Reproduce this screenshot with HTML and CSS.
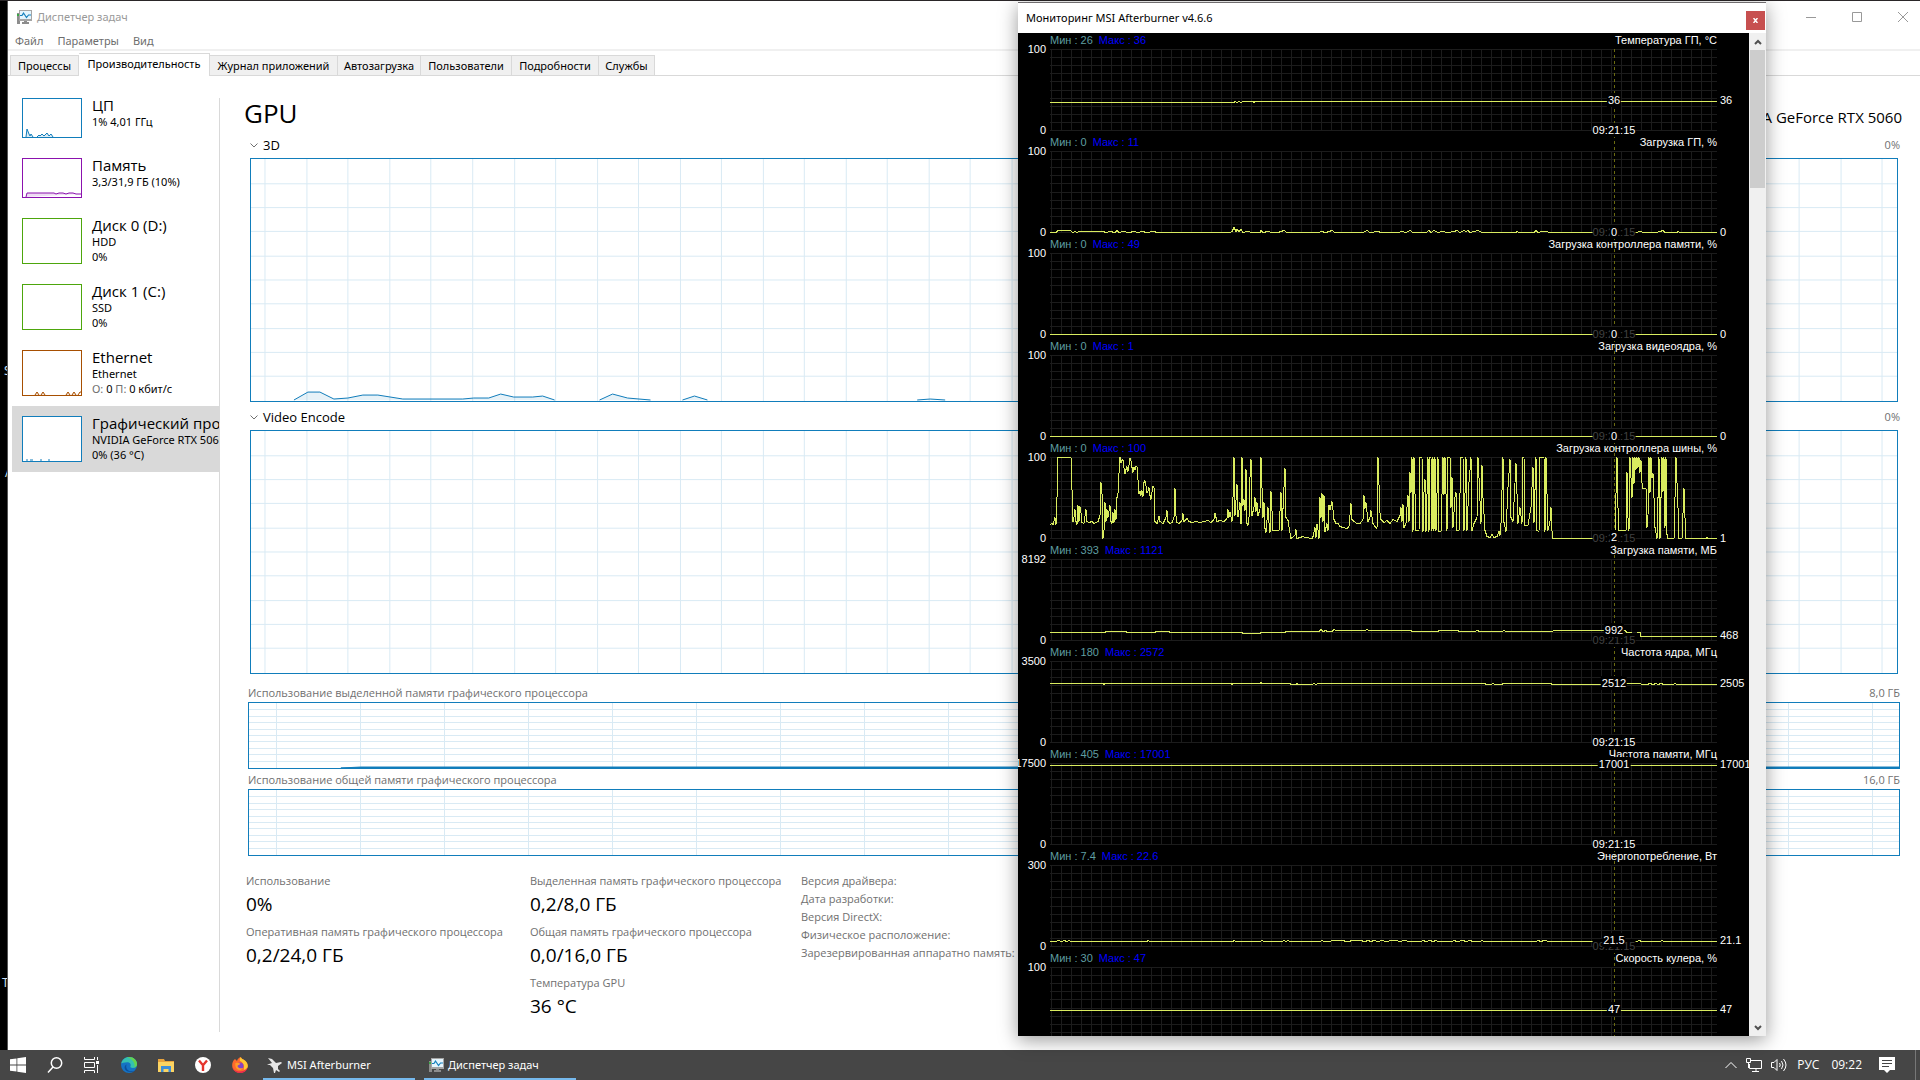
FILE: index.html
```html
<!DOCTYPE html>
<html lang="ru">
<head>
<meta charset="utf-8">
<title>Диспетчер задач</title>
<link rel="stylesheet" href="styles.css">
</head>
<body>
<svg class="defs" aria-hidden="true">
  <symbol id="grid-engine" viewBox="0 0 1648 244" preserveAspectRatio="none">
    <path class="grid-line" d="M14 0V244M56 0V244M97 0V244M139 0V244M180 0V244M222 0V244M264 0V244M305 0V244M347 0V244M388 0V244M430 0V244M471 0V244M513 0V244M554 0V244M596 0V244M637 0V244M679 0V244M720 0V244M762 0V244M803 0V244M845 0V244M886 0V244M928 0V244M969 0V244M1011 0V244M1052 0V244M1094 0V244M1135 0V244M1177 0V244M1218 0V244M1260 0V244M1301 0V244M1343 0V244M1384 0V244M1426 0V244M1467 0V244M1509 0V244M1550 0V244M1592 0V244M1633 0V244M0 25H1648M0 49H1648M0 73H1648M0 98H1648M0 122H1648M0 146H1648M0 171H1648M0 195H1648M0 219H1648"/>
  </symbol>
  <symbol id="grid-memory" viewBox="0 0 1652 67" preserveAspectRatio="none">
    <path class="grid-line" d="M28 0V67M112 0V67M196 0V67M280 0V67M364 0V67M448 0V67M532 0V67M616 0V67M700 0V67M785 0V67M869 0V67M953 0V67M1037 0V67M1121 0V67M1205 0V67M1289 0V67M1373 0V67M1457 0V67M1541 0V67M1625 0V67M0 7H1652M0 14H1652M0 20H1652M0 27H1652M0 33H1652M0 40H1652M0 47H1652M0 53H1652M0 60H1652"/>
  </symbol>
  <symbol id="icon-taskmgr" viewBox="0 0 16 16">
    <path fill="#8d8d8d" d="M1 4h3v11H1z"/><path fill="#39a845" d="M1 5h2v2H1z"/>
    <path fill="#a5a5a5" d="M3 1h13v11H3z"/><path fill="#e5f5fd" d="M4 2h11v8H4z"/>
    <path fill="none" stroke="#1680bd" stroke-width="1.2" d="M4 6.500h2L7.500 4l3 4.500L12.500 6H15"/>
    <path fill="#8d8d8d" d="M8 12h3v1h2v2H6v-2h2z"/>
  </symbol>
</svg>

<div class="desktop">
  <div class="workspace">
    <span class="shortcut shortcut-s">S</span>
    <span class="shortcut shortcut-a">A</span>
    <span class="shortcut shortcut-t">T</span>

    <main class="taskmgr">
      <header class="titlebar">
        <svg class="app-icon" aria-hidden="true"><use href="#icon-taskmgr"/></svg>
        <span class="title">Диспетчер задач</span>
        <div class="controls">
          <button aria-label="Свернуть"><svg viewBox="0 0 10 10"><path d="M0 5.500h10"/></svg></button>
          <button aria-label="Развернуть"><svg viewBox="0 0 10 10"><path d="M.5.5h9v9h-9z"/></svg></button>
          <button aria-label="Закрыть"><svg viewBox="0 0 10 10"><path d="M0 0l10 10M10 0L0 10"/></svg></button>
        </div>
      </header>
      <nav class="menu"><button>Файл</button><button>Параметры</button><button>Вид</button></nav>
      <nav class="tabs">
        <button>Процессы</button><button class="active">Производительность</button><button>Журнал приложений</button><button>Автозагрузка</button><button>Пользователи</button><button>Подробности</button><button>Службы</button>
      </nav>
      <div class="content">
        <aside class="sidebar">
          <button class="item">
            <svg class="thumb short cpu" viewBox="0 0 58 38"><path d="M3 38l1-8 2 5 1 2 1-2 2 3M14 38l2-2 1 1 2-2 2 2 3-3 2 3 2-2 2 3"/></svg>
            <span class="text"><span class="name">ЦП</span><span>1% 4,01 ГГц</span></span>
          </button>
          <button class="item">
            <svg class="thumb short mem" viewBox="0 0 58 38"><path d="M3 38l1-4h27l2 1 3-1h4l3 1 3-1h4l3 1h6"/></svg>
            <span class="text"><span class="name">Память</span><span>3,3/31,9 ГБ (10%)</span></span>
          </button>
          <button class="item">
            <svg class="thumb disk" viewBox="0 0 58 44"></svg>
            <span class="text"><span class="name">Диск 0 (D:)</span><span>HDD</span><span>0%</span></span>
          </button>
          <button class="item">
            <svg class="thumb disk" viewBox="0 0 58 44"></svg>
            <span class="text"><span class="name">Диск 1 (C:)</span><span>SSD</span><span>0%</span></span>
          </button>
          <button class="item">
            <svg class="thumb net" viewBox="0 0 58 44"><path d="M12 44l2-3 2 3M18 44l2-3 2 3M43 44l2-3 2 3M49 44l2-3 2 3M55 44l2-3 1 0"/></svg>
            <span class="text"><span class="name">Ethernet</span><span>Ethernet</span><span><i>О:</i> 0 <i>П:</i> 0 кбит/с</span></span>
          </button>
          <button class="item selected">
            <svg class="thumb cpu" viewBox="0 0 58 44"><path d="M3 43h2M7 43h3M17 43h2M25 43h2"/></svg>
            <span class="text"><span class="name">Графический процессор</span><span>NVIDIA GeForce RTX 5060</span><span>0% (36 °C)</span></span>
          </button>
        </aside>

        <section class="gpu">
          <div class="gpu-head"><h1>GPU</h1><span>NVIDIA GeForce RTX 5060</span></div>

          <div class="engine">
            <div class="chart-head">
              <svg class="chevron" viewBox="0 0 8 5"><path d="M.5.5L4 4 7.500.5"/></svg><h2>3D</h2><span>0%</span>
            </div>
            <svg class="chart" viewBox="0 0 1648 244" preserveAspectRatio="none">
              <use href="#grid-engine"/>
              <path class="usage" d="M43 243L57 235H69L83 242 97 241 112 238H127L152 242H212L223 241H238L250 237 263 240H282L292 239 304 243M349 243L362 237 377 241 400 243M432 243L444 239 457 243M667 243L680 242 695 243"/>
            </svg>
          </div>

          <div class="engine">
            <div class="chart-head">
              <svg class="chevron" viewBox="0 0 8 5"><path d="M.5.5L4 4 7.500.5"/></svg><h2>Video Encode</h2><span>0%</span>
            </div>
            <svg class="chart" viewBox="0 0 1648 244" preserveAspectRatio="none"><use href="#grid-engine"/></svg>
          </div>

          <div class="memory">
            <div class="memory-head"><span>Использование выделенной памяти графического процессора</span><span>8,0 ГБ</span></div>
            <svg class="memory-chart" viewBox="0 0 1652 67" preserveAspectRatio="none">
              <use href="#grid-memory"/>
              <path class="usage solid" d="M92 67L112 66H1652V67z"/>
            </svg>
            <div class="memory-head second"><span>Использование общей памяти графического процессора</span><span>16,0 ГБ</span></div>
            <svg class="memory-chart" viewBox="0 0 1652 67" preserveAspectRatio="none"><use href="#grid-memory"/></svg>
          </div>

          <div class="stats">
            <dl>
              <dt>Использование</dt><dd>0%</dd>
              <dt>Оперативная память графического процессора</dt><dd>0,2/24,0 ГБ</dd>
            </dl>
            <dl>
              <dt>Выделенная память графического процессора</dt><dd>0,2/8,0 ГБ</dd>
              <dt>Общая память графического процессора</dt><dd>0,0/16,0 ГБ</dd>
              <dt>Температура GPU</dt><dd>36 °C</dd>
            </dl>
            <ul>
              <li>Версия драйвера:</li><li>Дата разработки:</li><li>Версия DirectX:</li><li>Физическое расположение:</li><li>Зарезервированная аппаратно память:</li>
            </ul>
          </div>
        </section>
      </div>
    </main>

    <section class="monitor">
      <header class="monitor-title"><span>Мониторинг MSI Afterburner v4.6.6</span><button aria-label="Закрыть"><svg viewBox="0 0 5 5"><path d="M.5 0l4 5M4.500 0l-4 5"/></svg></button></header>
      <div class="monitor-body">
        <div class="graphs">

          <article class="graph">
            <header><span class="min">Мин : 26</span><span class="max">Макс : 36</span><h3>Температура ГП, °C</h3></header>
            <div class="scale"><span>100</span><span>0</span></div>
            <div class="plot">
              <svg viewBox="0 0 667 82"><path d="M0 53H184L185 52 187 53 189 52 191 53 193 52H203L204 53 205 52H667"/></svg>
              <span class="time">09:21:15</span><span class="value" style="top:51px">36</span>
              <span class="now" style="top:51px">36</span>
            </div>
          </article>

          <article class="graph">
            <header><span class="min">Мин : 0</span><span class="max">Макс : 11</span><h3>Загрузка ГП, %</h3></header>
            <div class="scale"><span>100</span><span>0</span></div>
            <div class="plot">
              <svg viewBox="0 0 667 82"><path d="M0 81H6L8 79H20L23 81 25 80 27 81 29 80H51L53 80 56 81 60 80 65 81 67 79 69 81 73 80 79 81 84 80 88 81 92 80 97 81 104 80 107 81H180L182 80 184 76 186 80 187 78 189 80 191 78 193 81 197 80 203 81 210 81 211 79 213 81 218 80 222 81 228 81 234 79 237 81H269L271 80 276 81 282 79 285 81H313L317 79 320 81 328 80 331 81H348L352 80 356 81 360 79 363 81H376L379 79 381 81 384 79 388 81 392 80 398 81 404 80 407 79 410 81 414 79 416 80 418 79 420 81 424 80 428 79 432 81H452L466 81 467 80 469 81H484L486 79 488 81 492 80 496 80 500 81H586L590 80 594 81 602 81 606 81 610 80 613 79 615 81H627L628 80 630 81H667"/></svg>
              <span class="time dim">09:21:15</span><span class="value" style="top:81px">0</span>
              <span class="now" style="top:81px">0</span>
            </div>
          </article>

          <article class="graph">
            <header><span class="min">Мин : 0</span><span class="max">Макс : 49</span><h3>Загрузка контроллера памяти, %</h3></header>
            <div class="scale"><span>100</span><span>0</span></div>
            <div class="plot">
              <svg viewBox="0 0 667 82"><path d="M0 81H667"/></svg>
              <span class="time dim">09:21:15</span><span class="value" style="top:81px">0</span>
              <span class="now" style="top:81px">0</span>
            </div>
          </article>

          <article class="graph">
            <header><span class="min">Мин : 0</span><span class="max">Макс : 1</span><h3>Загрузка видеоядра, %</h3></header>
            <div class="scale"><span>100</span><span>0</span></div>
            <div class="plot">
              <svg viewBox="0 0 667 82"><path d="M0 81H667"/></svg>
              <span class="time dim">09:21:15</span><span class="value" style="top:81px">0</span>
              <span class="now" style="top:81px">0</span>
            </div>
          </article>

          <article class="graph">
            <header><span class="min">Мин : 0</span><span class="max">Макс : 100</span><h3>Загрузка контроллера шины, %</h3></header>
            <div class="scale"><span>100</span><span>0</span></div>
            <div class="plot">
              <svg viewBox="0 0 667 82"><path d="M0 67L2 66 3 67 5 60 6 67 7 40 8 0H21L22 32 23 64 24 60 25 52 26 64 27 67 28 48 29 64 30 49 31 55 32 65 34 66 36 52 37 64 39 65 42 64 44 66 46 65 48 64 50 58 51 25 52 36 53 81 54 73 55 45 56 64 57 52 58 60 60 48 61 64 62 66 63 55 64 65 65 52 66 62 67 40 68 36 69 16 70 0 71 5 72 3 73 2 74 10 75 16 76 12 77 9 78 14 79 8 80 1 81 3 82 10 83 15 84 10 85 12 86 9 87 9 88 22 89 36 90 34 91 38 92 33 93 39 94 25 95 23 96 28 97 35 98 34 99 30 100 38 101 42 102 35 103 29 104 30 105 64 107 66 109 59 110 64 113 66 116 60 117 53 118 64 120 66 122 65 124 60 125 31 126 58 127 65 129 66 132 63 133 56 134 64 137 61 139 64 142 65 146 64 150 65 154 64 158 63 161 65 164 62 165 56 167 64 170 63 174 64 177 61 178 52 179 60 180 55 182 64 183 40 184 0 185 58 187 27 188 60 190 45 191 66 191 0 192 0 193 48 194 42 195 53 196 12 197 66 198 68 199 60 200 20 201 2 202 58 204 50 205 40 206 54 207 45 208 58 210 52 211 0 212 30 213 60 214 45 215 71 216 75 218 50 219 65 220 75 221 34 223 73 229 73 231 35 232 73 234 30 235 11 236 60 238 63 240 75 241 81 245 78 246 72 247 81 253 79 255 80 262 81 263 79 265 70 266 80 267 67 268 72 269 81 270 40 271 60 272 36 273 64 274 38 275 74 277 66 278 73 279 48 280 52 282 44 283 52 284 62 286 66 288 66 290 69 293 70 297 71 299 69 301 46 302 62 304 64 307 66 310 66 313 62 314 38 315 51 316 45 318 64 320 60 321 53 323 66 325 69 327 71 328 0 330 55 331 62 334 65 337 63 340 66 343 62 347 64 350 58 351 50 352 64 353 47 354 70 356 66 357 50 358 38 359 64 360 15 361 35 362 0 363 74 364 0 366 73 369 73 370 0 372 0 373 74 374 35 375 22 376 74 378 0 379 74 380 0 381 0 382 73 383 0 384 73 385 0 386 73 388 0 389 74 391 74 393 0 394 37 395 0 397 73 398 0 400 0 401 50 402 20 403 70 405 40 406 35 407 73 409 73 411 0 413 0 414 73 416 0 417 73 419 25 421 0 422 73 424 66 427 60 428 0 429 20 431 66 432 8 433 40 435 73 437 79 440 80 442 77 444 80 447 79 449 74 450 78 451 66 453 0 454 65 456 74 458 30 460 2 461 60 463 64 466 6 468 66 470 50 472 66 473 0 474 0 475 68 478 68 481 50 483 10 484 65 486 0 487 73 489 74 490 0 494 0 495 74 496 0 498 73 500 64 501 50 502 73 503 81 564 81 565 73 567 0 568 50 569 73 576 73 577 15 578 60 579 73 580 0 582 40 583 0 584 26 585 0 586 12 587 0 588 10 589 0 590 15 591 3 592 25 593 31 596 31 597 70 598 58 599 0 600 35 601 0 602 20 603 16 604 40 605 70 607 81 609 0 610 81 612 0 613 34 614 0 615 70 616 0 617 77 618 81 624 81 625 40 626 0 628 50 629 81 632 81 634 31 635 60 636 81 656 81 657 80 658 81H667"/></svg>
              <span class="time dim">09:21:15</span><span class="value" style="top:80px">2</span>
              <span class="now" style="top:81px">1</span>
            </div>
          </article>

          <article class="graph">
            <header><span class="min">Мин : 393</span><span class="max">Макс : 1121</span><h3>Загрузка памяти, МБ</h3></header>
            <div class="scale"><span>8192</span><span>0</span></div>
            <div class="plot">
              <svg viewBox="0 0 667 82"><path d="M0 73H55V72H76V73H105V72H119V73H192V74H210V73H235V72H269L271 70 273 72 276 71 277 72H282L284 70 286 71H315L317 70 319 71H361V72H388V71H408V72H425L427 71 430 72H452L454 71 456 72H502L504 71H575L577 73H582M587 73H590V77H667"/></svg>
              <span class="time dim">09:21:15</span><span class="value" style="top:71px">992</span>
              <span class="now" style="top:76px">468</span>
            </div>
          </article>

          <article class="graph">
            <header><span class="min">Мин : 180</span><span class="max">Макс : 2572</span><h3>Частота ядра, МГц</h3></header>
            <div class="scale"><span>3500</span><span>0</span></div>
            <div class="plot">
              <svg viewBox="0 0 667 82"><path d="M0 22H53L54 23 55 22H181L182 23 183 22H210L211 21 212 22H240V23H246L247 22 248 23H262L264 22 266 23 268 22H435V23H441L443 22 445 23H452V22H501V23H560L577 22H590L592 23H597L600 22 603 23 606 22 608 23 611 22 614 23H623L625 22 627 23H667"/></svg>
              <span class="time">09:21:15</span><span class="value" style="top:22px">2512</span>
              <span class="now" style="top:22px">2505</span>
            </div>
          </article>

          <article class="graph">
            <header><span class="min">Мин : 405</span><span class="max">Макс : 17001</span><h3>Частота памяти, МГц</h3></header>
            <div class="scale"><span>17500</span><span>0</span></div>
            <div class="plot">
              <svg viewBox="0 0 667 82"><path d="M0 2H667"/></svg>
              <span class="time">09:21:15</span><span class="value" style="top:1px">17001</span>
              <span class="now" style="top:1px">17001</span>
            </div>
          </article>

          <article class="graph">
            <header><span class="min">Мин : 7.4</span><span class="max">Макс : 22.6</span><h3>Энергопотребление, Вт</h3></header>
            <div class="scale"><span>300</span><span>0</span></div>
            <div class="plot">
              <svg viewBox="0 0 667 82"><path d="M0 76H6L8 75 12 76 14 75 17 76 19 75 21 76H97L98 75 100 76H183L184 75 186 76H210L212 75 214 76H232L234 75 236 76 238 75 240 76H270L272 75 274 76H280L282 75H294V76H300V75H312V76H315L318 75 321 76 324 75 328 76 332 75 336 76H338L340 75H346L350 76 354 75 360 76H371L373 75 376 76 380 75 383 76 386 75 388 76H402L404 75 407 76 413 75 416 76 420 75 423 76H430L432 75 434 76H486L488 75 491 76 494 75 500 76H587L589 75 592 76H610L612 75 614 76H667"/></svg>
              <span class="time dim">09:21:15</span><span class="value" style="top:75px">21.5</span>
              <span class="now" style="top:75px">21.1</span>
            </div>
          </article>

          <article class="graph">
            <header><span class="min">Мин : 30</span><span class="max">Макс : 47</span><h3>Скорость кулера, %</h3></header>
            <div class="scale"><span>100</span><span>0</span></div>
            <div class="plot">
              <svg viewBox="0 0 667 82"><path d="M0 43H667"/></svg>
              <span class="time">09:21:15</span><span class="value" style="top:42px">47</span>
              <span class="now" style="top:42px">47</span>
            </div>
          </article>
        </div>
        <div class="scrollbar">
          <button aria-label="Вверх"><svg viewBox="0 0 8 6"><path d="M1 5l3-3 3 3"/></svg></button>
          <div class="thumb-bar"></div>
          <button aria-label="Вниз"><svg viewBox="0 0 8 6"><path d="M1 1l3 3 3-3"/></svg></button>
        </div>
      </div>
    </section>
  </div>

  <footer class="taskbar">
    <button class="pin" aria-label="Пуск"><svg viewBox="0 0 16 16" fill="#fff"><path d="M0 2.300l6.500-.9v6.200H0zM7.300 1.300L16 0v7.600H7.300zM0 8.400h6.500v6.200L0 13.700zM7.300 8.400H16V16l-8.700-1.300z"/></svg></button>
    <button class="pin" aria-label="Поиск"><svg viewBox="0 0 16 16" fill="none" stroke="#fff" stroke-width="1.500"><circle cx="9.500" cy="6" r="5.200"/><path d="M6 10l-5 5.500"/></svg></button>
    <button class="pin" aria-label="Представление задач"><svg viewBox="0 0 16 16" fill="none" stroke="#fff"><path d="M.5 0v2.500h10V0M.5 5.500h10v5H.5zM.5 16v-2.500h10V16M13.500 0v3M13.500 8v8"/><path fill="#fff" stroke="none" d="M12 4h3v3h-3z"/></svg></button>
    <button class="pin" aria-label="Edge"><svg viewBox="0 0 16 16"><circle cx="8" cy="8" r="8" fill="#1573c4"/><path fill="#35c1b0" d="M.3 6.500C1.200 2.500 4.300 0 8 0c4.800 0 8 3.400 8 7 0 2.600-2 4-4.200 4-1.700 0-2.800-.7-2.400-1.400C10.400 7.500 9 5.300 6.300 5.300 3 5.300.6 6.300.3 6.500z"/><path fill="#64d34f" d="M8 0c4.800 0 8 3.400 8 7 0 2-1.200 3.200-2.600 3.700C14.500 7 12 2 6.500.2 7 0 7.500 0 8 0z"/><path fill="#0c4f9c" d="M5.600 7.500c-1.500 3.500 1.400 7.300 5.400 6.800 1.400-.1 2.600-.7 3.600-1.400-3 3-8.700 3-10.600-.6C3 10.300 3.800 8.300 5.600 7.500z"/></svg></button>
    <button class="pin" aria-label="Проводник"><svg viewBox="0 0 16 16"><path fill="#e8a33d" d="M0 2h6l1 2h9v3H0z"/><path fill="#fcd462" d="M0 5h16v10H0z"/><path fill="#3f8fd8" d="M3 9h10v6h-2.500v-3h-5v3H3z"/></svg></button>
    <button class="pin" aria-label="Яндекс"><svg viewBox="0 0 16 16"><circle cx="8" cy="8" r="8" fill="#fff"/><path fill="none" stroke="#e5352d" stroke-width="2.400" d="M4 3.500l4 4.700 4-4.700M8 8v6"/></svg></button>
    <button class="pin" aria-label="Firefox"><svg viewBox="0 0 16 16"><path fill="#ff6a2b" d="M3 2l2 2c.5-2 2-3.500 4-4 0 2 3 2.500 4.500 4C15.500 6 16 8 15.700 10c-.8 3.700-4 6-7.700 6-4.200 0-7.500-3-7.800-7C0 6 1 3.500 3 2z"/><path fill="#ffc933" d="M9 0c0 2 3 2.500 4.500 4 2 2 2.500 4 2.200 6-.8 2-2.500 3-4 2.500C13 9 11 5 8 4c-.5-1.500 0-3 1-4z"/><circle cx="8" cy="9" r="3.500" fill="#8443c9"/><path fill="#ff9c2a" d="M3.500 6c2-.7 3.500 0 5 .8C7.500 8 6 8 5.500 9c.5 2.500 4 3 6 1.500-1 2.500-4.500 3.500-6.500 1.500-1.800-1.800-2-4-1.500-6z"/><path fill="#e8264f" d="M.2 9c.8 3 3 5.500 7.800 5.500 2.500 0 5.500-1 7.500-4C14.700 14 11.500 16 8 16 4.200 16 .5 13 .2 9z"/></svg></button>
    <button class="task"><svg viewBox="0 0 16 16" fill="#e8e8e8"><path d="M1 1l4 1 4 4 5-1 1 1-4 3 0 3 2 2-1 1-3-2-1 3-1 0-1-5-3-3-3 0L2 7l3-1z"/></svg>MSI Afterburner</button>
    <button class="task"><svg viewBox="0 0 16 16"><use href="#icon-taskmgr"/></svg>Диспетчер задач</button>
    <div class="tray">
      <button aria-label="Скрытые значки"><svg width="12" height="8" viewBox="0 0 12 8"><path d="M.5 7L6 1.500 11.500 7"/></svg></button>
      <svg width="16" height="14" viewBox="0 0 16 14"><path d="M5 2.500h10.500v8H3.500V6M10 10.500v3M6 13.500h7M.5.5h4v4h-4zM2.500 5v5"/></svg>
      <svg width="17" height="14" viewBox="0 0 17 14"><path d="M.5 4.500H3L6 1.500v11l-3-3H.5zM8.500 5q1.500 2 0 4M10.500 3q3 4 0 8M12.500 1q5 6 0 12"/></svg>
      <span class="lang">РУС</span>
      <span class="clock">09:22</span>
      <button aria-label="Уведомления"><svg width="16" height="16" viewBox="0 0 16 16"><path class="bubble" d="M0 0h16v13h-5l-3 3-3-3H0z"/><path class="lines" d="M3 3.500h10M3 6.500h10M3 9.500h7"/></svg></button>
    </div>
  </footer>
</div>
</body>
</html>
```
FILE: styles.css
```css
* { box-sizing: border-box; margin: 0; padding: 0; }

body {
  font: 11px/18px "Noto Sans", "Open Sans", sans-serif;
  color: #000;
  background: #000;
}

button { font: inherit; color: inherit; background: none; border: 0; text-align: left; }
h1, h2, h3, i { font-weight: normal; font-style: normal; }
ul { list-style: none; }
svg { display: block; flex: none; }

.defs { position: absolute; width: 0; height: 0; }

.desktop { display: flex; flex-direction: column; height: 100vh; overflow: hidden; }

.workspace {
  position: relative;
  display: flex;
  flex: 1;
  min-height: 0;
  padding: 1px 0 0 7px;
  background: linear-gradient(#2a2628 1px, #000 1px);
}

.shortcut { position: absolute; font-size: 12px; color: #cfe2f5; }
.shortcut-s { left: 4px; top: 362px; }
.shortcut-a { left: 5px; top: 464px; }
.shortcut-t { left: 2px; top: 974px; }

/* Task manager */
.taskmgr { position: relative; display: flex; flex: 1; flex-direction: column; min-width: 0; border-left: 1px solid #555; background: #fff; }

.titlebar { display: flex; align-items: center; height: 31px; padding-left: 8px; color: #999; }
.app-icon { width: 16px; height: 16px; margin-right: 5px; }
.controls { display: flex; margin-left: auto; }
.controls button { width: 46px; height: 28px; padding-left: 24px; }
.controls svg { width: 10px; height: 10px; fill: none; stroke: #999; }

.menu { display: flex; gap: 14px; height: 19px; padding-left: 7px; border-bottom: 2px solid #f0f0f0; color: #6d6d6d; }

.tabs { display: grid; grid-template-columns: 69px 131px 128px 83px 91px 87px 56px; align-items: end; height: 25px; padding-left: 2px; border-bottom: 1px solid #d9d9d9; }
.tabs button { height: 20px; border: 1px solid #d9d9d9; border-width: 1px 1px 0 0; background: #f0f0f0; text-align: center; white-space: nowrap; }
.tabs button:first-child { border-left-width: 1px; }
.tabs .active { height: 23px; margin-bottom: -1px; padding-bottom: 3px; background: #fff; }

.content { display: flex; flex: 1; min-height: 0; }

.sidebar { width: 212px; padding: 12px 0 0 4px; margin-bottom: 18px; background: linear-gradient(#d9d9d9, #d9d9d9) right 0 top 22px / 1px 100% no-repeat; }
.item { display: flex; gap: 10px; width: 207px; padding: 10px 0 10px 10px; overflow: hidden; }
.item.selected { background: #d9d9d9; }
.thumb { width: 60px; height: 46px; border: 1px solid; background: #fff; }
.thumb.short { height: 40px; }
.thumb path { fill: currentColor; fill-opacity: .15; stroke: currentColor; }
.cpu { color: #117dbb; }
.mem { color: #8b12ae; }
.disk { color: #4da60c; }
.net { color: #a74f01; }
.text { display: flex; flex-direction: column; white-space: nowrap; line-height: 15px; }
.name { margin-bottom: 2px; font: 15px/14px "Open Sans", "Noto Sans", sans-serif; }
.text i { color: #707070; }

.gpu { flex: 1; min-width: 0; padding: 14px 20px 0 26px; font-family: "Open Sans", "Noto Sans", sans-serif; }
.gpu-head { display: flex; align-items: center; justify-content: space-between; height: 46px; margin: 0 -2px; }
.gpu-head h1 { font-size: 26px; line-height: 42px; }
.gpu-head span { font-size: 15px; padding-top: 8px; }

.engine { padding: 0 2px 6px 4px; }
.chart-head { display: flex; align-items: center; height: 18px; margin: 0 -2px 4px 0; color: #707070; }
.chart-head h2 { flex: 1; font-size: 13px; color: #000; }
.chevron { width: 8px; height: 5px; margin: 0 5px 0 0; fill: none; stroke: #707070; }
.chart, .memory-chart { width: 100%; border: 1px solid #117dbb; }
.chart { height: 244px; }
.memory-chart { height: 67px; }
.grid-line { fill: none; stroke: #d9eaf4; vector-effect: non-scaling-stroke; shape-rendering: crispEdges; }
.usage { fill: rgba(17, 125, 187, .1); stroke: #117dbb; vector-effect: non-scaling-stroke; }
.usage.solid { fill: #117dbb; }

.memory { padding: 4px 0 0 2px; }
.memory-head { display: flex; justify-content: space-between; height: 18px; color: #707070; }
.memory-head.second { margin-top: 2px; }

.stats { display: grid; grid-template-columns: 284px 271px auto; padding-top: 16px; white-space: nowrap; color: #707070; }
.stats dd { margin: 2px 0 7px; font-size: 19px; line-height: 24px; color: #000; }

/* Afterburner monitor */
.monitor {
  position: absolute;
  top: 2px;
  right: 154px;
  bottom: 14px;
  display: flex;
  flex-direction: column;
  width: 748px;
  border-top: 1px solid #6f6c6e;
  background: #fff;
  box-shadow: 0 4px 18px rgba(0, 0, 0, .4);
}
.monitor-title { display: flex; align-items: center; justify-content: space-between; height: 30px; padding: 0 1px 0 8px; }
.monitor-title button { display: grid; place-items: center; width: 19px; height: 19px; margin-top: 4px; background: #c75050; }
.monitor-title button svg { width: 5px; height: 5px; fill: none; stroke: #fff; stroke-width: 1.500; }
.monitor-body { display: flex; flex: 1; min-height: 0; }

.graphs { flex: 1; overflow: hidden; background: #000; color: #fff; font: 11px/14px "Liberation Sans", Arial, sans-serif; }
.graph { display: grid; grid-template: 16px 82px / 28px 667px; column-gap: 4px; height: 102px; }
.graph header { display: flex; grid-column: 2; gap: 6px; }
.graph h3 { position: relative; z-index: 1; margin-left: auto; font-size: 11px; }
.min { color: #5f9ea0; }
.max { color: #00f; }
.scale { display: flex; flex-direction: column; align-items: flex-end; justify-content: space-between; margin: -7px 0 -6px; }
.plot {
  position: relative;
  background:
    repeating-linear-gradient(90deg, transparent 0 1px, #1c1c1c 1px 2px, transparent 2px 10px),
    repeating-linear-gradient(#1c1c1c 0 1px, transparent 1px 8px) 0 0 / 100% 40px no-repeat,
    repeating-linear-gradient(#1c1c1c 0 1px, transparent 1px 8px) 0 41px / 100% 41px no-repeat;
}
.plot::before {
  content: "";
  position: absolute;
  left: 564px;
  top: -18px;
  width: 1px;
  height: 102px;
  background: repeating-linear-gradient(transparent 0 2px, #6b6b10 2px 5px, transparent 5px 6px);
}
.graph:first-child .plot::before { top: -2px; height: 84px; }
.plot svg { position: relative; width: 667px; height: 82px; overflow: visible; }
.plot path { fill: none; stroke: #d9ec5f; shape-rendering: crispEdges; transform: translate(0, .5px); }
.time, .value, .now { position: absolute; left: 564px; z-index: 2; transform: translate(-50%, -50%); background: #000; }
.time { top: 81px; }
.time.dim { color: #404040; }
.value { padding: 0 1px; }
.now { left: 670px; transform: translate(0, -50%); background: none; }

.scrollbar { display: flex; flex-direction: column; width: 17px; padding: 0 1px; background: #f0f0f0; }
.scrollbar button { display: grid; place-items: center; height: 17px; }
.scrollbar svg { width: 8px; height: 6px; fill: none; stroke: #505050; stroke-width: 2; }
.thumb-bar { height: 138px; margin-bottom: auto; background: #cdcdcd; }

/* Taskbar */
.taskbar { display: flex; align-items: stretch; height: 30px; padding-left: 10px; background: #464646; color: #fff; }
.pin { display: grid; place-items: center start; width: 37px; }
.pin svg, .task svg { width: 16px; height: 16px; }
.task { display: flex; align-items: center; gap: 4px; width: 152px; margin-right: 9px; padding: 2px 0 0 4px; border-bottom: 2px solid #76b9ed; }
.pin + .task { margin-left: -6px; }
.tray { display: flex; align-items: center; margin-left: auto; margin-right: 4px; padding-right: 20px; border-right: 1px solid #777; font: 12px/18px "Open Sans", "Noto Sans", sans-serif; }
.tray svg { margin-right: 9px; fill: none; stroke: #fff; }
.tray button:last-child svg { margin-right: 0; }
.lang { margin-right: 12px; }
.clock { margin-right: 17px; }
.tray .bubble { fill: #fff; stroke: none; }
.tray .lines { stroke: #464646; }
```
